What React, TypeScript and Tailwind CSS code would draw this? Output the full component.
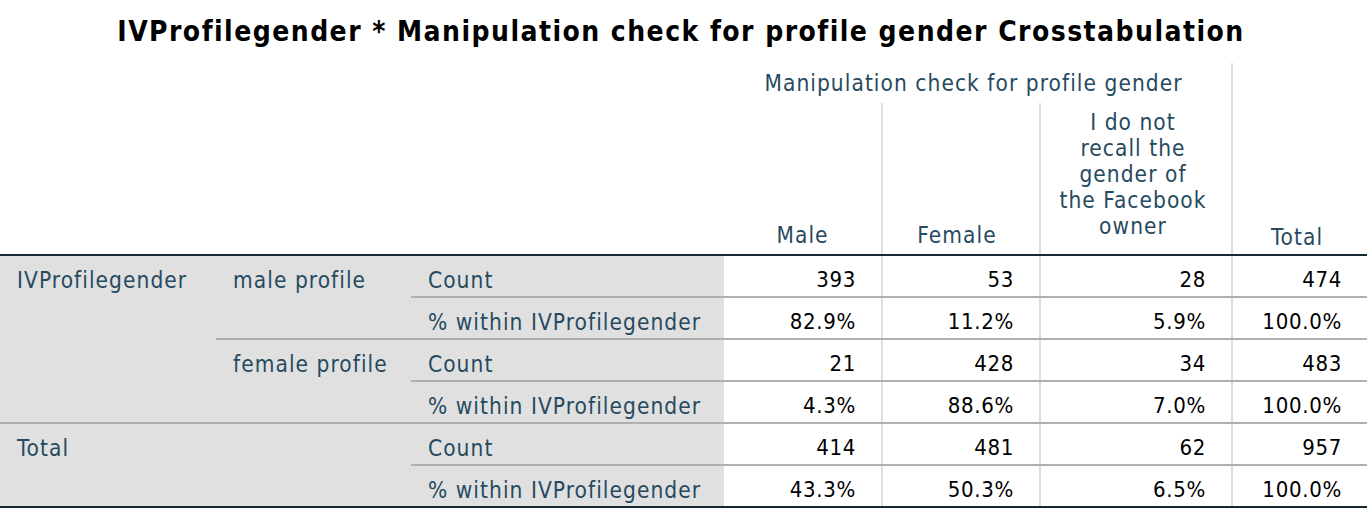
import React from "react";

const lbl = "text-[#264a60] text-[22.5px] tracking-[1.05px]";
const gray = "bg-[#e0e0e0]";
const rowLine = "border-b-2 border-b-[#b0b0b0]";
const vLine = "border-l-2 border-l-[#e0e0e0]";
const dark = "border-b-2 border-b-[#152935]";

type Row = {
  stat: string;
  vals: string[];
};

export default function App() {
  const font = "font-['DejaVu_Sans_Condensed','DejaVu_Sans',sans-serif] [font-stretch:condensed]";
  const num = "text-right pr-[25px] text-black pt-[7px]";
  const lab = `${lbl} text-left pl-[17px] pt-[7px] ${gray}`;

  const dataCells = (vals: string[], bottom: string) =>
    vals.map((v, i) => (
      <td key={i} className={`${num} ${bottom} ${i > 0 ? vLine : ""}`}>
        {v}
      </td>
    ));

  const r1: Row = { stat: "Count", vals: ["393", "53", "28", "474"] };
  const r2: Row = { stat: "% within IVProfilegender", vals: ["82.9%", "11.2%", "5.9%", "100.0%"] };
  const r3: Row = { stat: "Count", vals: ["21", "428", "34", "483"] };
  const r4: Row = { stat: "% within IVProfilegender", vals: ["4.3%", "88.6%", "7.0%", "100.0%"] };
  const r5: Row = { stat: "Count", vals: ["414", "481", "62", "957"] };
  const r6: Row = { stat: "% within IVProfilegender", vals: ["43.3%", "50.3%", "6.5%", "100.0%"] };

  return (
    <div className={`w-[1370px] h-[508px] bg-white overflow-hidden ${font} text-[22px] leading-[26px] tracking-[0.7px]`}>
      <div className="w-[1362px] h-[63px] flex items-center justify-center text-[28px] font-bold text-black tracking-[1.45px]">
        IVProfilegender * Manipulation check for profile gender Crosstabulation
      </div>
      <table className="w-[1367px] table-fixed border-collapse">
        <colgroup>
          <col className="w-[216px]" />
          <col className="w-[195px]" />
          <col className="w-[313px]" />
          <col className="w-[158px]" />
          <col className="w-[158px]" />
          <col className="w-[192px]" />
          <col className="w-[135px]" />
        </colgroup>
        <thead>
          <tr className="h-[40px]">
            <th colSpan={3} rowSpan={2} className={`${dark} font-normal`}></th>
            <th colSpan={3} className={`${lbl} font-normal text-center align-middle pr-[8px]`}>
              Manipulation check for profile gender
            </th>
            <th rowSpan={2} className={`${lbl} font-normal text-center align-bottom pb-[4px] pr-[6px] ${vLine} ${dark}`}>
              Total
            </th>
          </tr>
          <tr className="h-[152px]">
            <th className={`${lbl} font-normal text-center align-bottom pb-[6px] ${dark}`}>Male</th>
            <th className={`${lbl} font-normal text-center align-bottom pb-[6px] pr-[8px] ${vLine} ${dark}`}>Female</th>
            <th className={`${lbl} font-normal text-center align-bottom pb-[15px] pr-[6px] ${vLine} ${dark}`}>
              I do not
              <br />
              recall the
              <br />
              gender of
              <br />
              the Facebook
              <br />
              owner
            </th>
          </tr>
        </thead>
        <tbody>
          <tr className="h-[42px]">
            <td rowSpan={4} className={`${lab} align-top pt-[11px] ${rowLine}`}>IVProfilegender</td>
            <td rowSpan={2} className={`${lab} align-top pt-[11px] pl-[15px] ${rowLine}`}>male profile</td>
            <td className={`${lab} ${rowLine}`}>{r1.stat}</td>
            {dataCells(r1.vals, rowLine)}
          </tr>
          <tr className="h-[42px]">
            <td className={`${lab} ${rowLine}`}>{r2.stat}</td>
            {dataCells(r2.vals, rowLine)}
          </tr>
          <tr className="h-[42px]">
            <td rowSpan={2} className={`${lab} align-top pt-[11px] pl-[15px] ${rowLine}`}>female profile</td>
            <td className={`${lab} ${rowLine}`}>{r3.stat}</td>
            {dataCells(r3.vals, rowLine)}
          </tr>
          <tr className="h-[42px]">
            <td className={`${lab} ${rowLine}`}>{r4.stat}</td>
            {dataCells(r4.vals, rowLine)}
          </tr>
          <tr className="h-[42px]">
            <td colSpan={2} rowSpan={2} className={`${lab} align-top pt-[11px] ${dark}`}>Total</td>
            <td className={`${lab} ${rowLine}`}>{r5.stat}</td>
            {dataCells(r5.vals, rowLine)}
          </tr>
          <tr className="h-[42px]">
            <td className={`${lab} ${dark}`}>{r6.stat}</td>
            {dataCells(r6.vals, dark)}
          </tr>
        </tbody>
      </table>
    </div>
  );
}
